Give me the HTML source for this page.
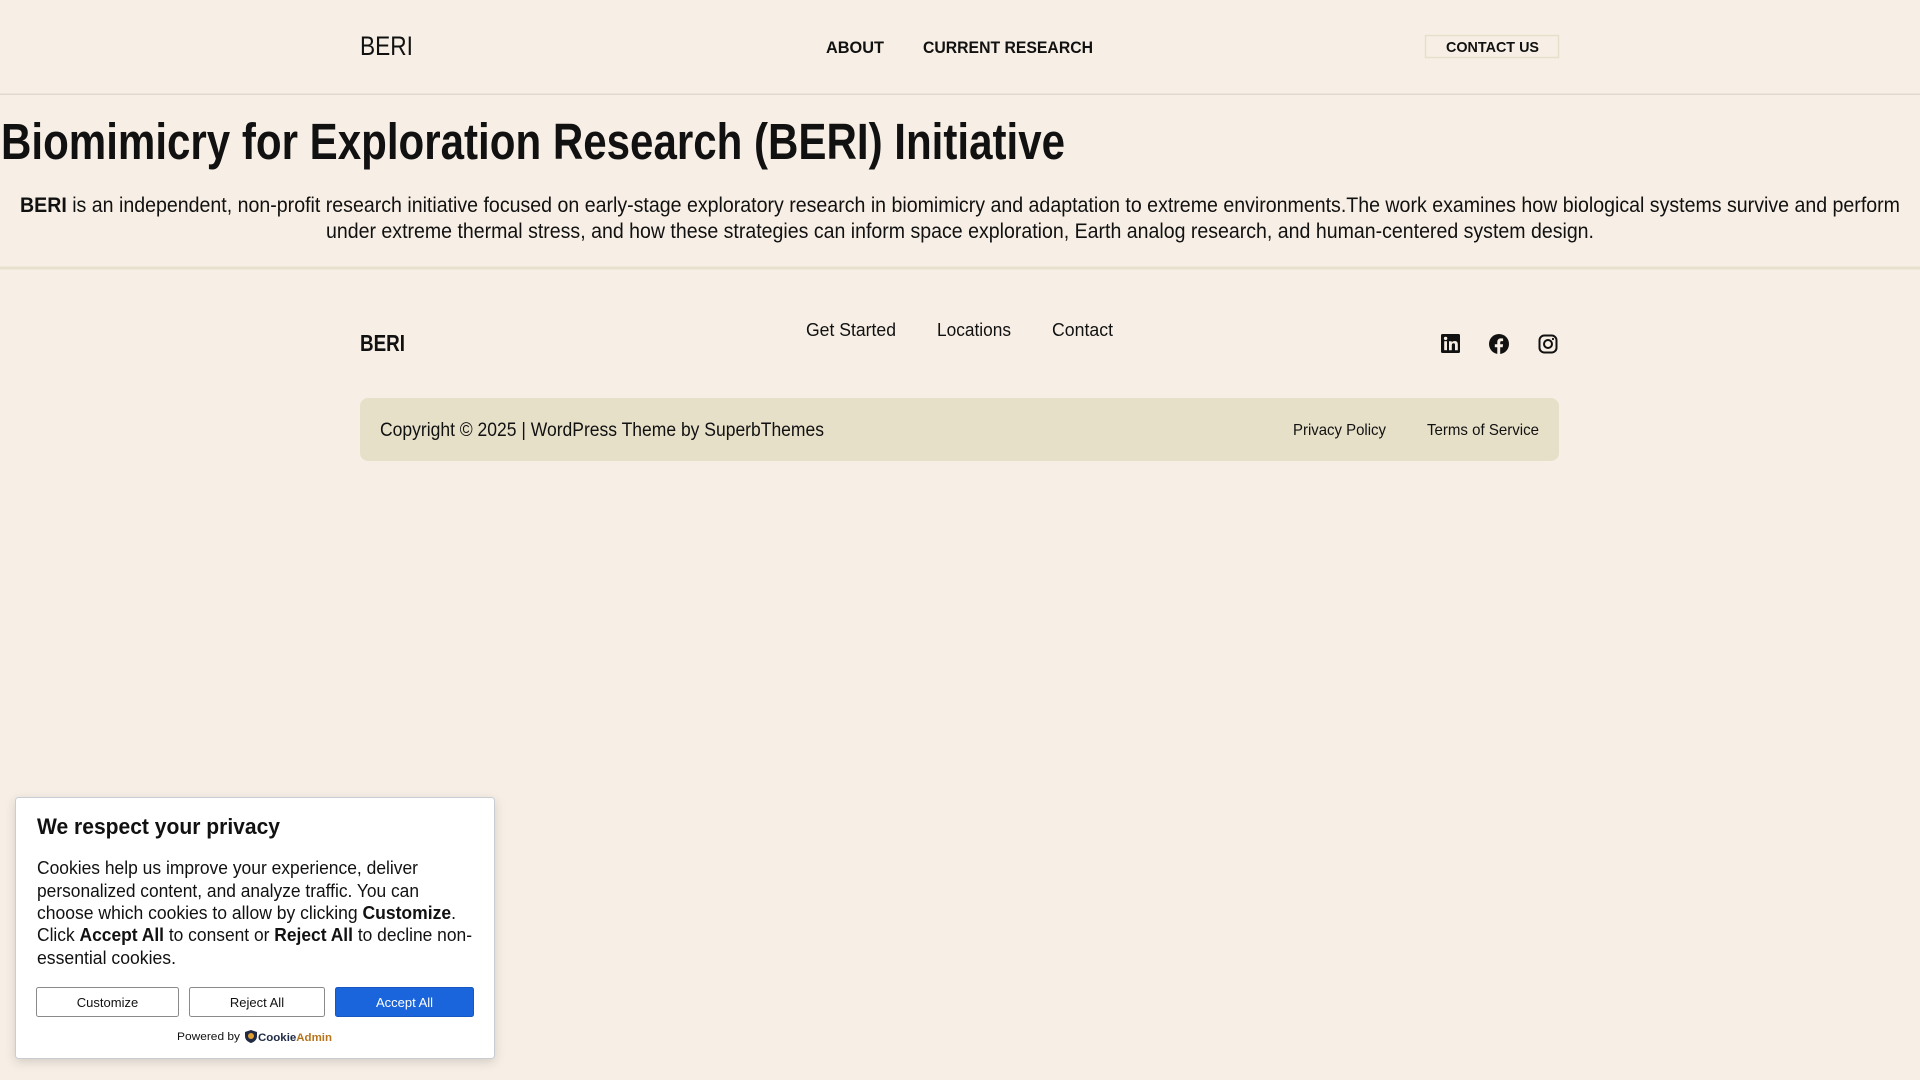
<!DOCTYPE html>
<html><head><meta charset="utf-8"><style>
html,body{margin:0;padding:0;background:#f7efe5;width:1920px;height:1080px;overflow:hidden}
svg{display:block}
text{font-family:"Liberation Sans",sans-serif;fill:#111}
</style></head><body>
<svg width="1920" height="1080" viewBox="0 0 1920 1080" xmlns="http://www.w3.org/2000/svg">
<defs><filter id="sh" x="-10%" y="-10%" width="120%" height="130%"><feDropShadow dx="0" dy="3" stdDeviation="5" flood-color="#000" flood-opacity="0.15"/></filter></defs>
<rect width="1920" height="1080" fill="#f7efe5"/>
<!-- header -->
<text x="360" y="55" font-size="27" textLength="53" lengthAdjust="spacingAndGlyphs">BERI</text>
<text x="826" y="53" font-size="17" font-weight="bold" textLength="58" lengthAdjust="spacingAndGlyphs">ABOUT</text>
<text x="923" y="53" font-size="17" font-weight="bold" textLength="170" lengthAdjust="spacingAndGlyphs">CURRENT RESEARCH</text>
<rect x="1425.5" y="35.5" width="133" height="22" fill="none" stroke="#e6dfcb" stroke-width="1.5"/>
<text x="1446" y="52" font-size="15" font-weight="bold" textLength="93" lengthAdjust="spacingAndGlyphs">CONTACT US</text>
<rect x="0" y="93.5" width="1920" height="1.5" fill="#e0d9cf"/>
<!-- hero -->
<text x="1" y="159" font-size="51" font-weight="bold" textLength="1064" lengthAdjust="spacingAndGlyphs">Biomimicry for Exploration Research (BERI) Initiative</text>
<text x="20" y="212" font-size="21" textLength="1880" lengthAdjust="spacingAndGlyphs"><tspan font-weight="bold">BERI</tspan> is an independent, non-profit research initiative focused on early-stage exploratory research in biomimicry and adaptation to extreme environments.The work examines how biological systems survive and perform</text>
<text x="326" y="238" font-size="21" textLength="1268" lengthAdjust="spacingAndGlyphs">under extreme thermal stress, and how these strategies can inform space exploration, Earth analog research, and human-centered system design.</text>
<rect x="0" y="266.5" width="1920" height="3" fill="#e7e0cd"/>
<!-- footer -->
<text x="360" y="351" font-size="23" font-weight="bold" textLength="45" lengthAdjust="spacingAndGlyphs">BERI</text>
<text x="806" y="336" font-size="18" textLength="90" lengthAdjust="spacingAndGlyphs">Get Started</text>
<text x="937" y="336" font-size="18" textLength="74" lengthAdjust="spacingAndGlyphs">Locations</text>
<text x="1052" y="336" font-size="18" textLength="61" lengthAdjust="spacingAndGlyphs">Contact</text>
<!-- linkedin -->
<g transform="translate(1441,334)">
<rect x="0" y="0" width="19" height="19" rx="1.5" fill="#111"/>
<rect x="3.2" y="7.2" width="2.8" height="9" fill="#f7efe5"/>
<circle cx="4.6" cy="4.4" r="1.7" fill="#f7efe5"/>
<path d="M8 7.2h2.7v1.3c.5-.9 1.6-1.5 3-1.5 2.4 0 3.1 1.5 3.1 3.7v5.5h-2.8v-5c0-1.1-.3-1.9-1.4-1.9-1.2 0-1.8.8-1.8 2v4.9H8z" fill="#f7efe5"/>
</g>
<!-- facebook -->
<g transform="translate(1489,334)">
<circle cx="10" cy="10" r="10" fill="#111"/>
<path d="M11.2 20.5v-7.3h2.5l.4-2.9h-2.9V8.5c0-.8.3-1.4 1.4-1.4h1.5V4.5c-.3 0-1.2-.1-2.2-.1-2.2 0-3.6 1.3-3.6 3.7v2.2H5.8v2.9h2.5v7.3z" fill="#f7efe5"/>
</g>
<!-- instagram -->
<g transform="translate(1538,334)" fill="none" stroke="#111" stroke-width="2">
<rect x="1.5" y="1.5" width="17" height="17" rx="4.8"/>
<circle cx="10" cy="10" r="4"/>
<circle cx="15" cy="5" r="0.6" fill="#111" stroke-width="1"/>
</g>
<rect x="360" y="398" width="1199" height="63" rx="8" fill="#e7e0c9"/>
<text x="380" y="436" font-size="19" textLength="444" lengthAdjust="spacingAndGlyphs">Copyright © 2025 | WordPress Theme by SuperbThemes</text>
<text x="1293" y="435" font-size="16" textLength="93" lengthAdjust="spacingAndGlyphs">Privacy Policy</text>
<text x="1427" y="435" font-size="16" textLength="112" lengthAdjust="spacingAndGlyphs">Terms of Service</text>
<!-- cookie box -->
<rect x="15.5" y="797.5" width="479" height="261" rx="3" fill="#fff" stroke="#c9ccd2" stroke-width="1" filter="url(#sh)"/>
<text x="37" y="834" font-size="22" font-weight="bold" textLength="243" lengthAdjust="spacingAndGlyphs">We respect your privacy</text>
<g font-size="18">
<text x="37" y="874" textLength="381" lengthAdjust="spacingAndGlyphs">Cookies help us improve your experience, deliver</text>
<text x="37" y="897" textLength="382" lengthAdjust="spacingAndGlyphs">personalized content, and analyze traffic. You can</text>
<text x="37" y="919" textLength="419" lengthAdjust="spacingAndGlyphs">choose which cookies to allow by clicking <tspan font-weight="bold">Customize</tspan>.</text>
<text x="37" y="941" textLength="435" lengthAdjust="spacingAndGlyphs">Click <tspan font-weight="bold">Accept All</tspan> to consent or <tspan font-weight="bold">Reject All</tspan> to decline non-</text>
<text x="37" y="964" textLength="139" lengthAdjust="spacingAndGlyphs">essential cookies.</text>
</g>
<rect x="36.5" y="987.5" width="142" height="29" rx="2" fill="#fff" stroke="#8a8a8a"/>
<text x="107.5" y="1007" font-size="13" text-anchor="middle">Customize</text>
<rect x="189.5" y="987.5" width="135" height="29" rx="2" fill="#fff" stroke="#8a8a8a"/>
<text x="257" y="1007" font-size="13" text-anchor="middle">Reject All</text>
<rect x="335.5" y="987.5" width="138" height="29" rx="2" fill="#1a64dc" stroke="#1757c0"/>
<text x="404.5" y="1007" font-size="13" text-anchor="middle" style="fill:#fff">Accept All</text>
<text x="177" y="1040" font-size="11" textLength="63" lengthAdjust="spacingAndGlyphs">Powered by</text>
<path d="M245 1032l6-2 6 2v4c0 4-3 6-6 7-3-1-6-3-6-7z" fill="#1f2a44"/>
<circle cx="251" cy="1036" r="3" fill="#e0a030"/>
<text x="258" y="1041" font-size="11" font-weight="bold" textLength="74" lengthAdjust="spacingAndGlyphs"><tspan style="fill:#1f2a44">Cookie</tspan><tspan style="fill:#b8741a">Admin</tspan></text>
</svg>
</body></html>
